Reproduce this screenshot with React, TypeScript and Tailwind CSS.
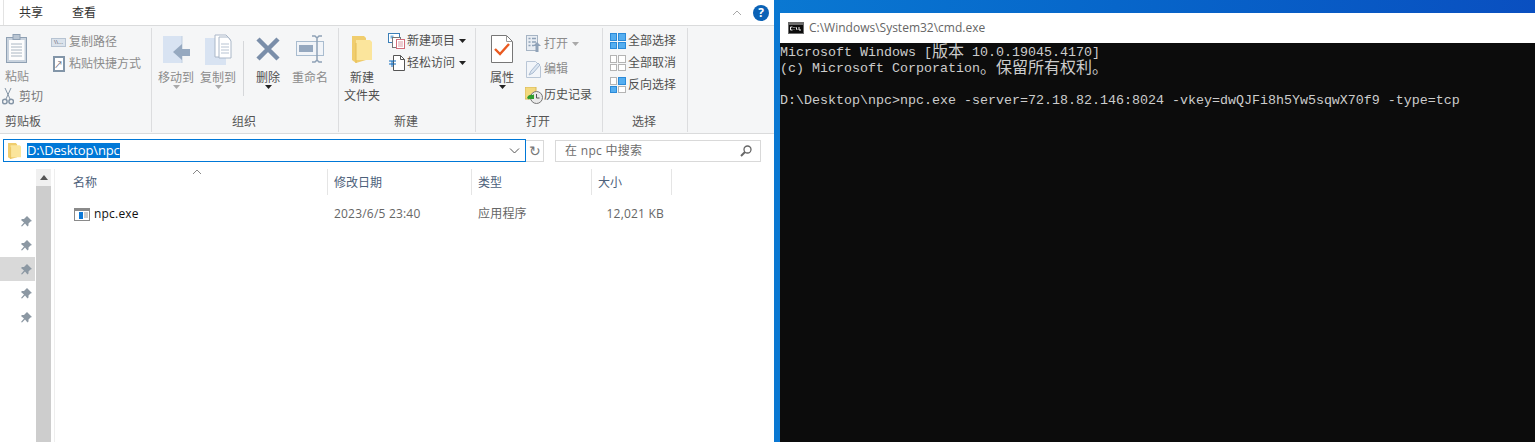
import React from "react";

const uiFont = "font-['Open_Sans','Noto_Sans_CJK_SC',sans-serif]";

const Caret = ({ gray }: { gray?: boolean }) => (
  <svg width="7" height="4" viewBox="0 0 7 4" className="block">
    <path d="M0 0h7L3.5 4z" fill={gray ? "#a9a9a9" : "#222"} />
  </svg>
);

const Group = ({
  width,
  label,
  left,
  children,
}: {
  width: string;
  label: string;
  left?: boolean;
  children: React.ReactNode;
}) => (
  <div className={`flex h-[104px] flex-col border-r border-[#dcdddf] ${width}`}>
    <div className="flex h-[86px] flex-none">{children}</div>
    <div
      className={`flex-1 text-[12px] leading-[16px] text-[#555] ${
        left ? "pl-[5px] text-left" : "pr-[2px] text-center"
      }`}
    >
      {label}
    </div>
  </div>
);

const Big = ({
  width,
  icon,
  lines,
  gray,
  caret,
  grayCaret,
}: {
  width: string;
  icon: React.ReactNode;
  lines: string[];
  gray?: boolean;
  caret?: boolean;
  grayCaret?: boolean;
}) => (
  <div className={`flex flex-none flex-col items-center pt-[6px] ${width}`}>
    <div className="flex h-[30px] items-center justify-center">{icon}</div>
    <div
      className={`mt-[5px] text-center text-[12px] leading-[18px] ${
        gray ? "text-[#8c8c8c]" : "text-[#505050]"
      }`}
    >
      {lines.map((l) => (
        <div key={l} className="whitespace-nowrap">
          {l}
        </div>
      ))}
    </div>
    {caret && (
      <div className="-mt-[2px]">
        <Caret gray={grayCaret} />
      </div>
    )}
  </div>
);

const Small = ({
  icon,
  text,
  gray,
  caret,
  grayCaret,
  height,
}: {
  icon: React.ReactNode;
  text: string;
  gray?: boolean;
  caret?: boolean;
  grayCaret?: boolean;
  height: string;
}) => (
  <div className={`flex items-center ${height}`}>
    <div className="flex w-[19px] flex-none items-center justify-center">
      {icon}
    </div>
    <span
      className={`ml-[1px] whitespace-nowrap text-[12px] leading-none ${
        gray ? "text-[#8c8c8c]" : "text-[#505050]"
      }`}
    >
      {text}
    </span>
    {caret && (
      <span className="ml-[4px]">
        <Caret gray={grayCaret} />
      </span>
    )}
  </div>
);

const Clipboard = () => (
  <svg width="22" height="29" viewBox="0 0 22 29">
    <rect x="0.5" y="3.5" width="20" height="25" fill="#c9d3de" stroke="#8fa0b3" />
    <rect x="3" y="6" width="15.5" height="20" fill="#fdfdfd" />
    <path d="M5 10h11M5 13h11M5 16h11M5 19h11M5 22h11" stroke="#aab6c2" />
    <rect x="7" y="0.5" width="7" height="5" fill="#b9c5d2" stroke="#8fa0b3" />
  </svg>
);

const Scissors = () => (
  <svg width="12" height="17" viewBox="0 0 12 17" fill="none" stroke="#8595a6">
    <path d="M3 0l5 11M9 0L4 11" />
    <circle cx="2.8" cy="13.5" r="2.3" strokeWidth="1.5" />
    <circle cx="9.2" cy="13.5" r="2.3" strokeWidth="1.5" />
  </svg>
);

const MoveTo = () => (
  <svg width="27" height="29" viewBox="0 0 27 29">
    <path d="M0 1h19v27H0z" fill="#d8e3f2" />
    <path d="M19 1v27" stroke="#c2cfe0" />
    <path d="M10 17l9-8v5h8v7h-8v4z" fill="#96a9c0" />
  </svg>
);

const CopyTo = () => (
  <svg width="27" height="31" viewBox="0 0 27 31">
    <path d="M0 4h21v27H0z" fill="#d8e3f2" />
    <path d="M10 1h11l4 4v18H10z" fill="#fff" stroke="#aab7c8" />
    <path d="M14 3h9l3 4v17H14z" fill="#fff" stroke="#aab7c8" />
    <path d="M16 10h8M16 13h8M16 16h8M16 19h8" stroke="#b7c3d2" />
  </svg>
);

const DeleteX = () => (
  <svg width="26" height="26" viewBox="0 0 26 26">
    <path d="M3 3l20 20M23 3L3 23" stroke="#7a8ea9" strokeWidth="4.5" />
  </svg>
);

const Rename = () => (
  <svg width="29" height="28" viewBox="0 0 29 28" fill="none">
    <rect x="0.5" y="6.5" width="27" height="14" fill="#f1f4f8" stroke="#a9bccf" />
    <rect x="3" y="10" width="14" height="7" fill="#95a8bf" />
    <path
      d="M16 1h3l2 2 2-2h3M21 3v22M16 27h3l2-2 2 2h3"
      stroke="#8ea1b6"
      strokeWidth="1.5"
    />
  </svg>
);

const Folder = ({ w = 20, h = 27 }: { w?: number; h?: number }) => (
  <svg width={w} height={h} viewBox="0 0 20 27" preserveAspectRatio="none">
    <path d="M0 0h12l2 2v22L4 27 0 24z" fill="#f0cd6e" />
    <path d="M4 4h14l2 2v18H4z" fill="#fbe59c" />
    <path d="M4 27V7" stroke="#e6bd55" />
  </svg>
);

const NewItem = () => (
  <svg width="17" height="16" viewBox="0 0 17 16" fill="none">
    <rect x="0.5" y="0.5" width="11" height="9" fill="#fff" stroke="#3b7fb8" />
    <rect x="2.5" y="2.5" width="3" height="3" fill="#77b3e0" />
    <rect x="4.5" y="4.5" width="8" height="10" fill="#fff" stroke="#777" />
    <rect x="8.5" y="6.5" width="8" height="9" fill="#fff" stroke="#d16d7a" />
    <path d="M10 9h5M10 11h5M10 13h5" stroke="#d99aa3" />
  </svg>
);

const EasyAccess = () => (
  <svg width="16" height="16" viewBox="0 0 16 16" fill="none">
    <path d="M4.5 0.5h7l4 4v11h-11z" fill="#fff" stroke="#555" />
    <path d="M11.5 0.5v4h4" stroke="#555" />
    <path d="M0 6h7M0 9h7" stroke="#0e6cc0" strokeWidth="1.2" />
    <path d="M3 6v6" stroke="#0e6cc0" />
  </svg>
);

const Properties = () => (
  <svg width="22" height="28" viewBox="0 0 22 28" fill="none">
    <path d="M0.5 0.5h15l6 6v21h-21z" fill="#fff" stroke="#777" />
    <path d="M15.5 0.5v6h6" stroke="#999" />
    <path d="M4 14l5 5 9-10" stroke="#ea5a20" strokeWidth="2.4" />
  </svg>
);

const OpenIcon = () => (
  <svg width="15" height="17" viewBox="0 0 15 17" fill="none">
    <rect x="0.5" y="0.5" width="11" height="15" fill="#e8edf3" stroke="#a6b4c4" />
    <path d="M2.5 3.5h2M6 3.5h4M2.5 7h2M6 7h4M2.5 10.5h2M6 10.5h2" stroke="#8fa2b8" strokeWidth="1.5" />
    <path d="M11 7l4 4h-2.500v6h-3v-6H7z" fill="#8fa2b8" />
  </svg>
);

const EditIcon = () => (
  <svg width="15" height="17" viewBox="0 0 15 17" fill="none">
    <path d="M0.500 0.500h9l5 5v11h-14z" fill="#f2f5f9" stroke="#b9c6d6" />
    <path d="M3 14l2-4 7-8 2 2-7 8z" fill="#dce6f1" stroke="#a9bad0" />
  </svg>
);

const History = () => (
  <svg width="18" height="17" viewBox="0 0 18 17" fill="none">
    <path d="M0 0h11v12H0z" fill="#f3d97e" stroke="#d8b858" />
    <circle cx="11.500" cy="10.500" r="6" fill="#e9e9e9" stroke="#777" />
    <path d="M11.500 7v4h3" stroke="#555" />
    <path d="M2 11a5 5 0 0 1 6-3l1-1v5H4l1.500-1.500a3 3 0 0 0-1.500 2z" fill="#2e9d2e" />
  </svg>
);

const SelectGrid = ({ on }: { on: boolean[] }) => (
  <div className="grid h-[16px] w-[16px] grid-cols-2 gap-[1px]">
    {on.map((o, i) => (
      <div
        key={i}
        className={
          o ? "bg-[#55aef0] border border-[#2b8ad8]" : "border border-[#b4b4b4] bg-white"
        }
      />
    ))}
  </div>
);

const Pin = () => (
  <svg width="11" height="11" viewBox="0 0 11 11">
    <path d="M6 0l5 5-1.500.500-2 2 .000 2-1 1-2.500-3L1 10.500 0 10l3-3.500-3-2.500 1-1h2l2-2z" fill="#8c98a3" />
  </svg>
);

const ExeIcon = () => (
  <svg width="16" height="13" viewBox="0 0 16 13">
    <rect x="0.500" y="0.500" width="15" height="12" fill="#fff" stroke="#8a8a8a" />
    <rect x="1" y="1" width="14" height="2" fill="#8a8a8a" />
    <rect x="5" y="4" width="4" height="7" fill="#0b78d7" />
    <path d="M10 5h4M10 7h4M10 9h4" stroke="#9a9a9a" />
  </svg>
);

const CmdIcon = () => (
  <svg width="16" height="12" viewBox="0 0 16 12">
    <rect width="16" height="12" fill="#6b6b6b" />
    <rect x="1" y="3" width="14" height="8" fill="#0c0c0c" />
    <path d="M4.500 5h-2v3h2M6 5v1M6 7.500v.5M8 5l1 3M11 5v3h2" stroke="#eee" fill="none" />
  </svg>
);

// inline-block so the CJK font doesn't push the console line's baseline down
const Cjk = ({ children }: { children: string }) => (
  <span className="inline-block h-[16px] align-top font-['Noto_Sans_CJK_SC',monospace] text-[16px] leading-[11px]">
    {children}
  </span>
);

const columns = [
  { label: "修改日期", width: "w-[144px]" },
  { label: "类型", width: "w-[120px]" },
  { label: "大小", width: "w-[80px]" },
];

const pins = [false, false, true, false, false];

export default function App() {
  return (
    <div className={`flex h-[442px] w-[1535px] overflow-hidden ${uiFont}`}>
      <div className="flex w-[774px] flex-none flex-col bg-white">
        {/* tabs */}
        <div className="flex h-[26px] flex-none border-b border-[#dadbdc] pr-[5px]">
          <div className="ml-[3px] flex flex-1 items-center border-l border-[#e3e3e3] pl-[15px]">
            <span className="text-[12px] text-[#333]">共享</span>
            <span className="ml-[29px] text-[12px] text-[#333]">查看</span>
            <svg width="10" height="6" viewBox="0 0 10 6" className="ml-auto mr-[11px]" fill="none">
              <path d="M1 5l4-4 4 4" stroke="#a8a8a8" />
            </svg>
            <div className="flex h-[16px] w-[16px] items-center justify-center rounded-full bg-[#0b62b6] text-[12px] font-bold leading-none text-white">
              ?
            </div>
          </div>
        </div>

        {/* ribbon */}
        <div className="flex h-[108px] flex-none items-start border-b border-[#dadbdc] bg-[#f5f6f7] pt-[2px]">
          <Group width="w-[152px]" label="剪贴板" left>
            <div className="-mt-[1px] flex w-[50px] flex-none flex-col pl-[2px]">
              <div className="w-[30px]">
                <Big width="w-[30px]" gray icon={<Clipboard />} lines={["粘贴"]} />
              </div>
              <div className="mt-[2px] flex items-center">
                <Scissors />
                <span className="ml-[5px] text-[12px] leading-none text-[#777]">剪切</span>
              </div>
            </div>
            <div className="-ml-[1px] flex flex-col pt-[3px]">
              <Small
                height="h-[22px]"
                gray
                text="复制路径"
                icon={
                  <div className="flex h-[9px] w-[15px] items-center justify-center border border-[#b6c3d2] bg-[#dbe3ec] text-[6px] leading-none text-[#556]">
                    \\...
                  </div>
                }
              />
              <Small
                height="h-[22px]"
                gray
                text="粘贴快捷方式"
                icon={
                  <div className="flex h-[16px] w-[12px] items-center justify-center border-2 border-[#8295a8] bg-white text-[9px] leading-none text-[#667]">
                    ↗
                  </div>
                }
              />
            </div>
          </Group>

          <Group width="w-[187px]" label="组织">
            <div className="flex pl-[3px]">
              <Big width="w-[42px]" gray caret grayCaret icon={<MoveTo />} lines={["移动到"]} />
              <Big width="w-[42px]" gray caret grayCaret icon={<CopyTo />} lines={["复制到"]} />
              <div className="ml-[4px] mt-[13px] h-[55px] w-px bg-[#d5d7da]" />
              <Big width="w-[48px]" caret icon={<DeleteX />} lines={["删除"]} />
              <Big width="w-[36px]" gray icon={<Rename />} lines={["重命名"]} />
            </div>
          </Group>

          <Group width="w-[137px]" label="新建">
            <Big width="w-[46px]" icon={<Folder />} lines={["新建", "文件夹"]} />
            <div className="flex flex-col pt-[2px] pl-[2px]">
              <Small height="h-[22px]" caret text="新建项目" icon={<NewItem />} />
              <Small height="h-[22px]" caret text="轻松访问" icon={<EasyAccess />} />
            </div>
          </Group>

          <Group width="w-[127px]" label="打开">
            <div className="flex pl-[10px]">
              <Big width="w-[32px]" caret icon={<Properties />} lines={["属性"]} />
              <div className="flex flex-col pl-[6px] pt-[3px]">
                <Small height="h-[25px]" gray caret grayCaret text="打开" icon={<OpenIcon />} />
                <Small height="h-[26px]" gray text="编辑" icon={<EditIcon />} />
                <Small height="h-[26px]" text="历史记录" icon={<History />} />
              </div>
            </div>
          </Group>

          <Group width="w-[85px]" label="选择">
            <div className="flex flex-col pl-[5px] pt-[2px]">
              <Small height="h-[22px]" text="全部选择" icon={<SelectGrid on={[true, true, true, true]} />} />
              <Small height="h-[22px]" text="全部取消" icon={<SelectGrid on={[false, false, false, false]} />} />
              <Small height="h-[22px]" text="反向选择" icon={<SelectGrid on={[false, true, true, false]} />} />
            </div>
          </Group>
        </div>

        {/* address bar */}
        <div className="flex h-[33px] flex-none items-center pl-[3px] pr-[13px]">
          <div className="flex h-[23px] w-[523px] flex-none items-center border border-[#0078d7] pl-[4px] pr-[5px]">
            <Folder w={13} h={16} />
            <span className="ml-[6px] bg-[#0078d7] text-[13px] leading-[15px] tracking-[-0.15px] text-white">
              D:\Desktop\npc
            </span>
            <svg width="11" height="6" viewBox="0 0 11 6" fill="none" className="ml-auto">
              <path d="M1 0.500l4.500 4.500 4.500-4.500" stroke="#555" />
            </svg>
          </div>
          <div className="flex h-[22px] w-[18px] flex-none items-center justify-center border border-l-0 border-[#d9d9d9] text-[14px] leading-none text-[#777]">
            ↻
          </div>
          <div className="ml-[11px] flex h-[22px] flex-1 items-center border border-[#d9d9d9] pl-[9px] pr-[8px] text-[12px] text-[#6d6d6d]">
            <span className="tracking-[0.3px]">在 npc 中搜索</span>
            <svg width="12" height="12" viewBox="0 0 12 12" className="ml-auto" fill="none" stroke="#666">
              <circle cx="7.500" cy="4.500" r="3.500" strokeWidth="1.300" />
              <path d="M5 7l-4 4" strokeWidth="2" />
            </svg>
          </div>
        </div>

        {/* content */}
        <div className="flex min-h-0 flex-1 pt-[2px]">
          <div className="flex w-[36px] flex-none flex-col pt-[40px]">
            {pins.map((active, i) => (
              <div
                key={i}
                className={`flex h-[24px] w-[35px] items-center justify-end pr-[3px] ${
                  active ? "bg-[#d9d9d9]" : ""
                }`}
              >
                <Pin />
              </div>
            ))}
          </div>
          <div className="flex w-[15px] flex-none flex-col bg-[#cdcdcd]">
            <div className="flex h-[17px] flex-none items-center justify-center bg-[#f0f0f0]">
              <svg width="8" height="5" viewBox="0 0 8 5">
                <path d="M0 5l4-5 4 5z" fill="#555" />
              </svg>
            </div>
          </div>
          <div className="ml-[3px] flex-1 border-l border-[#eeeeee]">
            <div className="relative flex h-[26px] items-center text-[12px] text-[#4c607a]">
              <div className="flex h-full w-[273px] flex-none items-center border-r border-[#e5e5e5] pl-[18px] pt-[2px]">
                名称
              </div>
              <svg width="10" height="5" viewBox="0 0 10 5" fill="none" className="absolute left-[137px] top-0">
                <path d="M1 5l4-4 4 4" stroke="#888" />
              </svg>
              {columns.map((c) => (
                <div
                  key={c.label}
                  className={`flex h-full flex-none items-center border-r border-[#e5e5e5] pl-[6px] pt-[2px] ${c.width}`}
                >
                  {c.label}
                </div>
              ))}
            </div>
            <div className="mt-[8px] flex h-[22px] items-center text-[12px] tracking-[0.2px] text-[#666]">
              <div className="flex w-[273px] flex-none items-center pl-[19px] text-[#111]">
                <ExeIcon />
                <span className="ml-[4px]">npc.exe</span>
              </div>
              <div className="w-[144px] flex-none pl-[6px]">2023/6/5 23:40</div>
              <div className="w-[120px] flex-none pl-[6px]">应用程序</div>
              <div className="w-[72px] flex-none text-right">12,021 KB</div>
            </div>
          </div>
        </div>
      </div>

      {/* cmd over wallpaper */}
      <div className="flex min-w-0 flex-1 flex-col bg-gradient-to-r from-[#0a78d2] to-[#0a4fc0] pl-[6px] pt-[13px]">
        <div className="flex h-[30px] flex-none items-center bg-white pl-[8px]">
          <CmdIcon />
          <span className="ml-[5px] text-[12px] text-[#666]">C:\Windows\System32\cmd.exe</span>
        </div>
        <div className="flex-1 whitespace-pre bg-[#0c0c0c] pt-[2px] font-['Liberation_Mono',monospace] text-[13.33px] leading-[16px] text-[#cccccc]">
          <div className="h-[16px]">
            Microsoft Windows [<Cjk>版本</Cjk> 10.0.19045.4170]
          </div>
          <div className="h-[16px]">
            (c) Microsoft Corporation<Cjk>。保留所有权利。</Cjk>
          </div>
          <div className="h-[16px]">&nbsp;</div>
          <div className="h-[16px]">D:\Desktop\npc&gt;npc.exe -server=72.18.82.146:8024 -vkey=dwQJFi8h5Yw5sqwX70f9 -type=tcp</div>
        </div>
      </div>
    </div>
  );
}
